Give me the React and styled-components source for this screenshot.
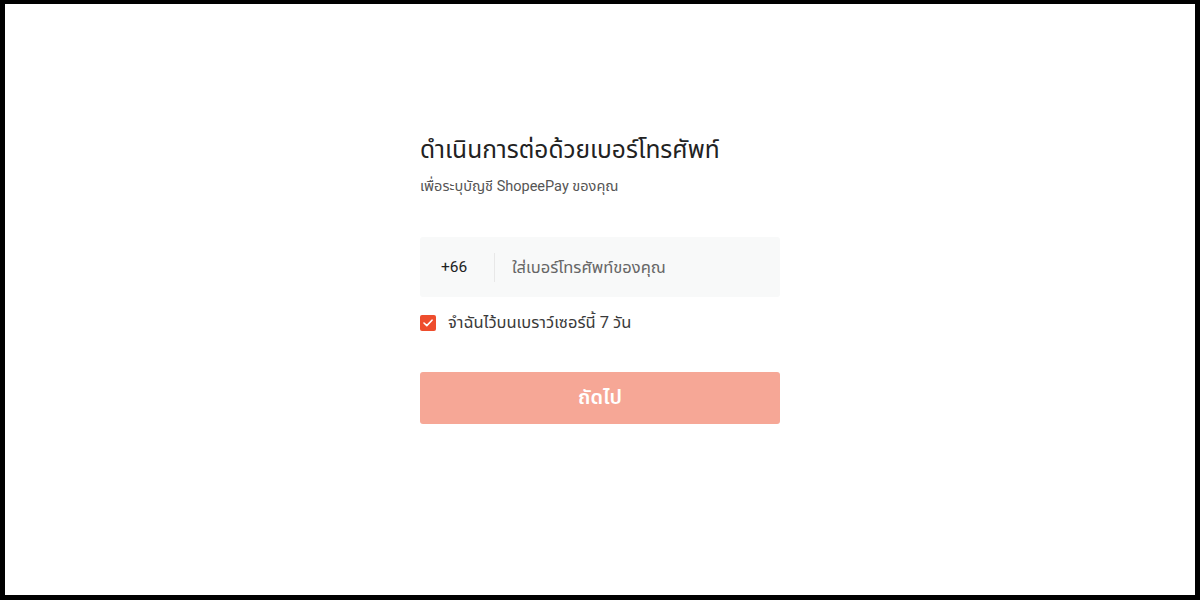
import React, { useState } from 'react';
import styled, { createGlobalStyle } from 'styled-components';

const GlobalStyle = createGlobalStyle`
  html, body {
    margin: 0;
    padding: 0;
    background: #000;
  }
  body {
    font-family: Roboto, "Noto Sans", "Noto Sans Thai", sans-serif;
  }
`;

function App() {
  const [phone, setPhone] = useState('');
  const [remember, setRemember] = useState(true);

  return (
    <Frame>
      <GlobalStyle />
      <Page>
        <FormWrapper onSubmit={e => e.preventDefault()}>
          <Title>ดำเนินการต่อด้วยเบอร์โทรศัพท์</Title>
          <Subtitle>เพื่อระบุบัญชี ShopeePay ของคุณ</Subtitle>
          <PhoneField>
            <Prefix>+66</Prefix>
            <Divider />
            <PhoneInput
              value={phone}
              placeholder="ใส่เบอร์โทรศัพท์ของคุณ"
              onChange={e => setPhone(e.target.value)}
              type="tel"
              name="phone"
            />
          </PhoneField>
          <RememberRow onClick={() => setRemember(!remember)}>
            <CheckBox checked={remember}>
              {remember && (
                <svg width="10" height="8" viewBox="0 0 10 8">
                  <path d="M1 4 L3.8 6.6 L9 1.2" fill="none" stroke="#fff" strokeWidth="1.6" strokeLinecap="round" strokeLinejoin="round" />
                </svg>
              )}
            </CheckBox>
            <RememberText>จำฉันไว้บนเบราว์เซอร์นี้ 7 วัน</RememberText>
          </RememberRow>
          <Button disabled={!phone}>ถัดไป</Button>
        </FormWrapper>
      </Page>
    </Frame>
  );
}

export default App;

const Frame = styled.div`
  width: 1200px;
  height: 600px;
  box-sizing: border-box;
  border: 5px solid #000;
  border-top-width: 4px;
`;

const Page = styled.div`
  height: 100%;
  background: #fff;
  display: flex;
  justify-content: center;
  padding-top: 130px;
  box-sizing: border-box;
`;

const FormWrapper = styled.form`
  width: 360px;
  display: flex;
  flex-direction: column;
`;

const Title = styled.h1`
  margin: 0;
  font-size: 24.5px;
  font-weight: 400;
  line-height: 32px;
  color: #222;
`;

const Subtitle = styled.p`
  margin: 11px 0 0;
  font-size: 14.5px;
  line-height: 20px;
  color: #555;
`;

const PhoneField = styled.div`
  margin-top: 40px;
  height: 60px;
  display: flex;
  align-items: center;
  background: #f8f9f9;
  border-radius: 3px;
`;

const Prefix = styled.span`
  padding-left: 21px;
  width: 74px;
  box-sizing: border-box;
  font-size: 15.5px;
  color: #222;
`;

const Divider = styled.span`
  width: 1px;
  height: 29px;
  background: #e8e8e8;
`;

const PhoneInput = styled.input`
  all: unset;
  flex: 1;
  height: 100%;
  padding-left: 17px;
  font-size: 16.5px;
  color: #222;
  &::placeholder {
    color: #666;
  }
`;

const RememberRow = styled.label`
  margin-top: 15px;
  height: 22px;
  display: flex;
  align-items: center;
  gap: 12px;
  cursor: pointer;
`;

const CheckBox = styled.span`
  width: 16px;
  height: 16px;
  border-radius: 2px;
  display: flex;
  align-items: center;
  justify-content: center;
  background: ${props => (props.checked ? '#ee4d2d' : '#fff')};
  border: ${props => (props.checked ? 'none' : '1px solid #ccc')};
`;

const RememberText = styled.span`
  font-size: 16.5px;
  line-height: 22px;
  color: #3a3a3a;
`;

const Button = styled.button`
  margin-top: 38px;
  height: 52px;
  border: none;
  border-radius: 3px;
  background: #ee4d2d;
  color: #fff;
  font-family: inherit;
  font-size: 20px;
  font-weight: 600;
  cursor: pointer;
  &:disabled {
    background: #f6a796;
    cursor: default;
  }
`;
